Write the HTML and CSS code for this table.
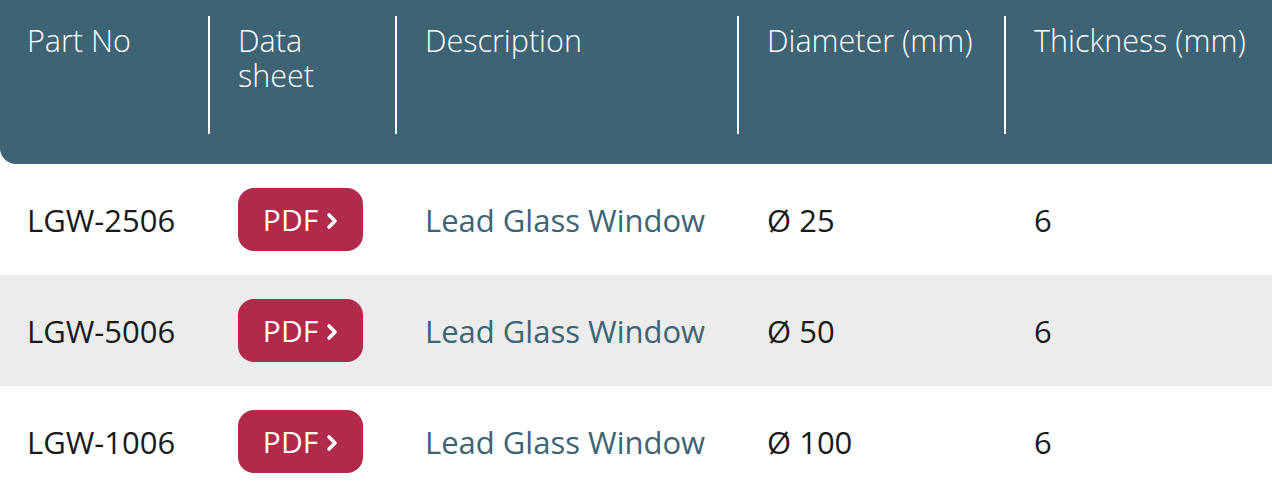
FILE: index.html
```html
<!DOCTYPE html>
<html lang="en">
<head>
<meta charset="utf-8">
<title>Lead Glass Windows</title>
<link rel="stylesheet" href="styles.css">
</head>
<body>
<table class="spec">
  <colgroup>
    <col class="c1"><col class="c2"><col class="c3"><col class="c4"><col class="c5">
  </colgroup>
  <thead>
    <tr>
      <th class="first"><div class="hcell">Part No</div></th>
      <th><div class="hcell divided">Data<br>sheet</div></th>
      <th><div class="hcell divided">Description</div></th>
      <th><div class="hcell divided">Diameter (mm)</div></th>
      <th><div class="hcell divided">Thickness (mm)</div></th>
    </tr>
  </thead>
  <tbody>
    <tr>
      <td class="first">LGW-2506</td>
      <td><a class="pdf" href="#">PDF<svg class="chev" viewBox="0 0 12 18" width="12" height="18"><polyline points="3,3 9,9 3,15" /></svg></a></td>
      <td class="desc">Lead Glass Window</td>
      <td>Ø 25</td>
      <td>6</td>
    </tr>
    <tr class="alt">
      <td class="first">LGW-5006</td>
      <td><a class="pdf" href="#">PDF<svg class="chev" viewBox="0 0 12 18" width="12" height="18"><polyline points="3,3 9,9 3,15" /></svg></a></td>
      <td class="desc">Lead Glass Window</td>
      <td>Ø 50</td>
      <td>6</td>
    </tr>
    <tr>
      <td class="first">LGW-1006</td>
      <td><a class="pdf" href="#">PDF<svg class="chev" viewBox="0 0 12 18" width="12" height="18"><polyline points="3,3 9,9 3,15" /></svg></a></td>
      <td class="desc">Lead Glass Window</td>
      <td>Ø 100</td>
      <td>6</td>
    </tr>
  </tbody>
</table>
</body>
</html>
```
FILE: styles.css
```css
html, body {
  margin: 0;
  padding: 0;
  background: #ffffff;
  overflow: hidden;
}
body {
  font-family: "Open Sans", "Noto Sans", sans-serif;
  color: #1a1a1a;
}
.spec {
  border-collapse: collapse;
  border-spacing: 0;
  table-layout: fixed;
  width: 1272px;
}
.c1 { width: 208px; }
.c2 { width: 187px; }
.c3 { width: 342px; }
.c4 { width: 267px; }
.c5 { width: 268px; }

.spec thead th {
  background: #3d6374;
  color: #ffffff;
  font-weight: 300;
  font-size: 30.5px;
  line-height: 35px;
  text-align: left;
  vertical-align: top;
  padding: 16px 0 30px 0;
}
.spec thead th.first {
  border-bottom-left-radius: 16px;
}
.hcell {
  height: 118px;
  box-sizing: border-box;
  padding: 7px 0 0 27px;
}
.hcell.divided {
  border-left: 2px solid #ffffff;
  padding-left: 28px;
}
.spec tbody td {
  height: 111px;
  padding: 0 0 0 30px;
  font-size: 31px;
  vertical-align: middle;
  white-space: nowrap;
}
.spec tbody td.first {
  padding-left: 27px;
}
.spec tbody tr.alt td {
  background: #ececec;
}
.desc {
  color: #3d6374;
}
.pdf {
  display: inline-flex;
  align-items: center;
  justify-content: center;
  gap: 8px;
  width: 125px;
  height: 63px;
  box-sizing: border-box;
  background: #b22a4a;
  color: #ffffff;
  border-radius: 16px;
  text-decoration: none;
  font-size: 30px;
}
.chev {
  fill: none;
  stroke: #ffffff;
  stroke-width: 3.6;
  stroke-linecap: round;
  stroke-linejoin: round;
  margin-top: 2px;
}
```
